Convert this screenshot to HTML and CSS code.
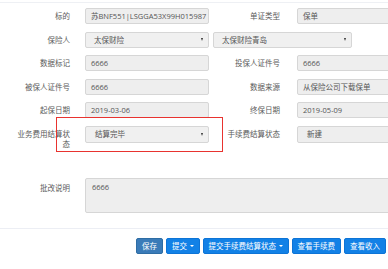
FILE: index.html
```html
<!DOCTYPE html>
<html lang="zh">
<head>
<meta charset="utf-8">
<link rel="stylesheet" href="styles.css">
</head>
<body>
<div class="page">
  <div class="topline"></div>
  <div class="form">
    <div class="row">
      <div class="label">标的</div>
      <div class="field">苏BNF551|LSGGA53X99H015987</div>
      <div class="label label-r">单证类型</div>
      <div class="field field-r">保单</div>
    </div>
    <div class="row row-sel">
      <div class="label">保险人</div>
      <div class="field select"><span>太保财险</span><i class="arrow"></i></div>
      <div class="field select select-wide"><span>太保财险青岛</span><i class="arrow"></i></div>
    </div>
    <div class="row">
      <div class="label">数据标记</div>
      <div class="field">6666</div>
      <div class="label label-r">投保人证件号</div>
      <div class="field field-r">6666</div>
    </div>
    <div class="row">
      <div class="label">被保人证件号</div>
      <div class="field">6666</div>
      <div class="label label-r">数据来源</div>
      <div class="field field-r">从保险公司下载保单</div>
    </div>
    <div class="row">
      <div class="label">起保日期</div>
      <div class="field">2019-03-06</div>
      <div class="label label-r">终保日期</div>
      <div class="field field-r">2019-05-09</div>
    </div>
    <div class="row row-tall">
      <div class="label label-wrap">业务费用结算状态</div>
      <div class="field select select-tall"><span>结算完毕</span><i class="arrow"></i></div>
      <div class="label label-r">手续费结算状态</div>
      <div class="field field-r select-tall">新建</div>
    </div>
    <div class="row row-area">
      <div class="label label-top">批改说明</div>
      <div class="field textarea">6666</div>
    </div>
  </div>
  <div class="highlight"></div>
  <div class="separator"></div>
  <div class="buttons">
    <button class="btn btn-save">保存</button>
    <button class="btn">提交<i class="caret"></i></button>
    <button class="btn">提交手续费结算状态<i class="caret"></i></button>
    <button class="btn">查看手续费</button>
    <button class="btn">查看收入</button>
  </div>
</div>
</body>
</html>
```

FILE: styles.css
```css
html, body {
  margin: 0;
  padding: 0;
  background: #fff;
  overflow: hidden;
}
body {
  width: 388px;
  height: 269px;
  font-family: "Open Sans", "Noto Sans CJK SC", sans-serif;
  font-size: 7.5px;
  color: #555;
}
.page {
  position: relative;
  width: 388px;
  height: 269px;
  overflow: hidden;
}
.topline {
  margin-top: 2px;
  height: 1px;
  background: #eef0f4;
}
.form {
  padding-top: 5px;
}
.row {
  display: grid;
  grid-template-columns: 85px 124px 88px 110px;
  align-items: center;
  height: 16px;
  margin-bottom: 7.5px;
}
.row-sel {
  grid-template-columns: 85px 124px 143px;
}
.select-wide {
  margin-left: 4px;
}
.label {
  box-sizing: border-box;
  text-align: right;
  padding-right: 15px;
  padding-left: 12px;
  line-height: 10px;
  color: #5a5a5a;
  white-space: nowrap;
}
.label-r {
  padding-right: 17px;
  padding-left: 0;
}
.label-wrap {
  white-space: normal;
  align-self: start;
  padding-top: 3px;
}
.label-top {
  align-self: start;
  padding-top: 5px;
}
.field {
  box-sizing: border-box;
  height: 16px;
  line-height: 14px;
  background: #eee;
  border: 1px solid #d6d6d6;
  border-radius: 2px;
  padding: 0 5px;
  white-space: nowrap;
  overflow: hidden;
  color: #555;
}
.select {
  display: flex;
  align-items: center;
  justify-content: space-between;
  padding: 0 5px 0 8px;
  background: #f0f0f0;
}
.arrow {
  width: 0;
  height: 0;
  border-left: 1.5px solid transparent;
  border-right: 1.5px solid transparent;
  border-top: 3px solid #333;
}
.row-tall {
  height: 23px;
  align-items: start;
  margin-bottom: 29.5px;
}
.select-tall {
  height: 17px;
  line-height: 15px;
}
.row-tall .select-tall.select {
  padding-left: 9px;
}
.row-tall .field-r {
  padding-left: 9px;
}
.row-tall .label-r {
  line-height: 17px;
}
.row-area {
  grid-template-columns: 85px 320px;
  height: 35px;
  align-items: start;
  margin-bottom: 0;
}
.textarea {
  height: 35px;
  line-height: 12px;
  padding: 2px 6px;
}
.highlight {
  position: absolute;
  left: 56px;
  top: 117px;
  width: 167px;
  height: 35px;
  box-sizing: border-box;
  border: 1.5px solid #e8332f;
}
.separator {
  margin-top: 15px;
  height: 1px;
  background: #eceef4;
}
.buttons {
  display: flex;
  gap: 3px;
  margin-top: 9px;
  padding-left: 136px;
}
.btn {
  flex: none;
  height: 16px;
  box-sizing: border-box;
  border: 1px solid #0d74d6;
  border-radius: 2px;
  background: #1281e6;
  color: #fff;
  font-family: "Open Sans", "Noto Sans CJK SC", sans-serif;
  font-size: 7.5px;
  line-height: 14px;
  padding: 0 5px;
  display: flex;
  align-items: center;
  white-space: nowrap;
  margin: 0;
}
.btn-save {
  background: #3a7bb8;
  border-color: #2e6da4;
}
.caret {
  display: inline-block;
  width: 0;
  height: 0;
  margin-left: 2.5px;
  border-left: 2px solid transparent;
  border-right: 2px solid transparent;
  border-top: 2px solid #fff;
}
```
